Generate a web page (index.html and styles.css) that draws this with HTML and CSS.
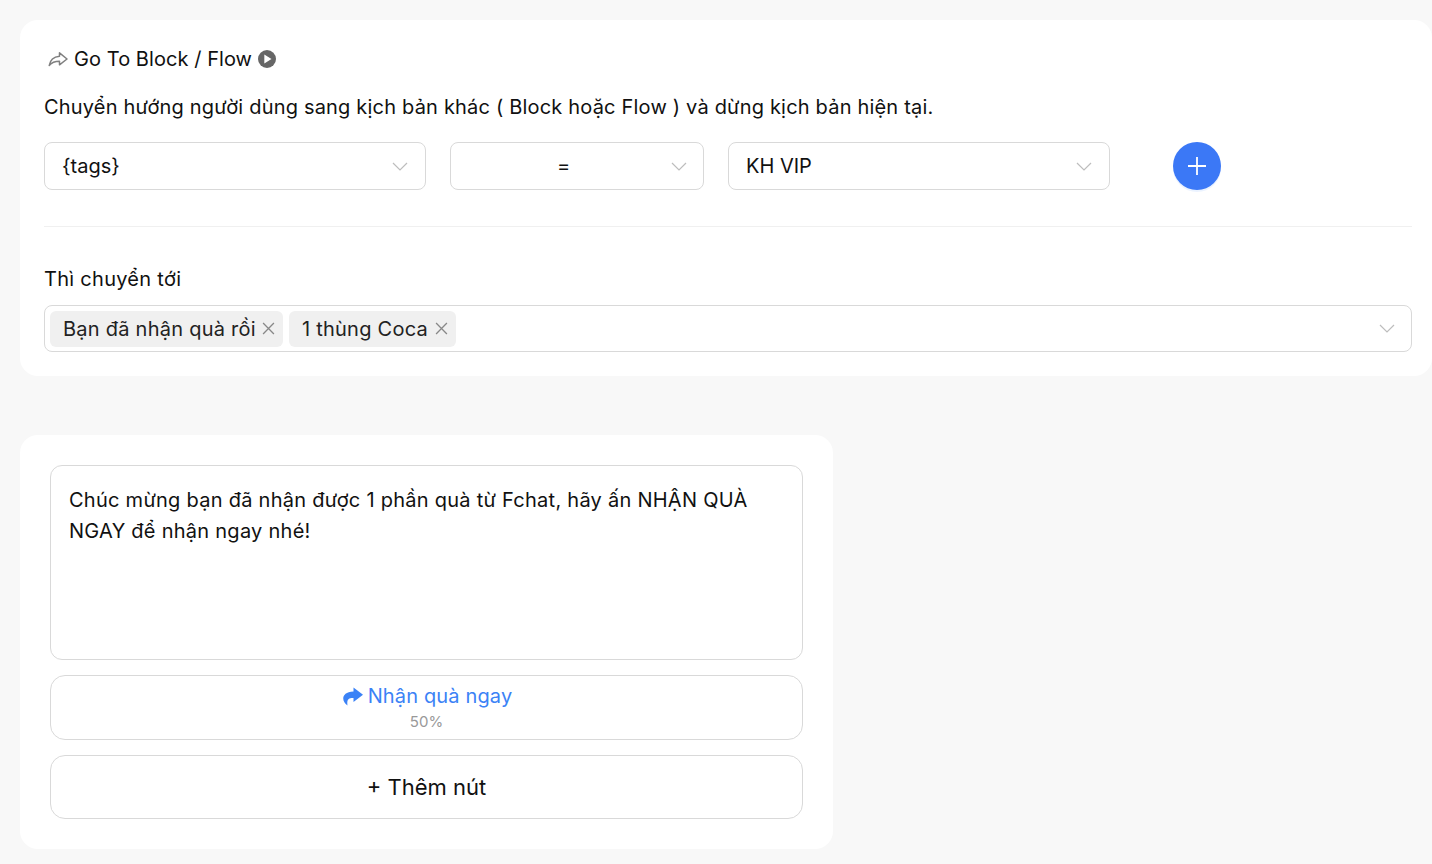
FILE: index.html
```html
<!DOCTYPE html>
<html lang="vi">
<head>
  <meta charset="UTF-8">
  <meta name="viewport" content="width=device-width, initial-scale=1.0">
  <title>Go To Block / Flow</title>
  <link rel="stylesheet" href="styles.css">
</head>
<body>
  <section class="card flow-card">
    <h2 class="flow-title">
      <svg class="share-outline" width="20" height="16" viewBox="0 0 20 16"><path d="M11.5 1.800 19 8l-7.500 5.800v-3.500C7 10.300 3.800 11.300 1.200 14.500 2 9.500 5.500 5.800 11.500 5.200z" fill="none" stroke="#808080" stroke-width="1.500" stroke-linejoin="round"/></svg>
      <span>Go To Block / Flow</span>
      <svg width="18" height="18" viewBox="0 0 18 18"><circle cx="9" cy="9" r="9" fill="#666"/><path d="M6.300 4.500 13.500 9l-7.200 4.500z" fill="#fff"/></svg>
    </h2>
    <p class="flow-desc">Chuyển hướng người dùng sang kịch bản khác ( Block hoặc Flow ) và dừng kịch bản hiện tại.</p>

    <div class="condition-row">
      <div class="select select-tag">
        <span>{tags}</span>
        <svg class="chevron" width="16" height="9" viewBox="0 0 16 9"><path d="M1 1l7 7 7-7"/></svg>
      </div>
      <div class="select select-op">
        <span class="op-value">=</span>
        <svg class="chevron" width="16" height="9" viewBox="0 0 16 9"><path d="M1 1l7 7 7-7"/></svg>
      </div>
      <div class="select select-value">
        <span>KH VIP</span>
        <svg class="chevron" width="16" height="9" viewBox="0 0 16 9"><path d="M1 1l7 7 7-7"/></svg>
      </div>
      <button class="add-btn">
        <svg width="18" height="18" viewBox="0 0 18 18"><path d="M9 0v18M0 9h18" stroke="#fff" stroke-width="1.800"/></svg>
      </button>
    </div>

    <hr class="divider">

    <p class="target-label">Thì chuyển tới</p>
    <div class="select select-multi">
      <div class="chips">
        <span class="chip">Bạn đã nhận quà rồi <svg width="13" height="13" viewBox="0 0 12 12"><path d="M1 1l10 10M11 1 1 11"/></svg></span>
        <span class="chip chip-last">1 thùng Coca <svg width="13" height="13" viewBox="0 0 12 12"><path d="M1 1l10 10M11 1 1 11"/></svg></span>
      </div>
      <svg class="chevron" width="16" height="9" viewBox="0 0 16 9"><path d="M1 1l7 7 7-7"/></svg>
    </div>
  </section>

  <section class="card message-card">
    <div class="message-box">Chúc mừng bạn đã nhận được 1 phần quà từ Fchat, hãy ấn NHẬN QUÀ NGAY để nhận ngay nhé!</div>
    <div class="msg-button">
      <div class="msg-link">
        <svg width="22" height="19" viewBox="0 0 22 19"><path d="M12.500 0.500 22 7.800 12.500 15V11C8 10.800 5.500 12 6.500 18.500 0.500 15-0.500 5 12.500 4.500z" fill="#3b82f6"/></svg>
        <span>Nhận quà ngay</span>
      </div>
      <div class="msg-percent">50%</div>
    </div>
    <div class="msg-button msg-add">+ Thêm nút</div>
  </section>
</body>
</html>
```
FILE: styles.css
```css
* {
  box-sizing: border-box;
}

body {
  margin: 0;
  padding: 20px 0 0 20px;
  background-color: #f8f8f8;
  font-family: Inter, "Noto Sans", sans-serif;
  font-size: 20px;
  color: #111;
  overflow: hidden;
}

.card {
  background-color: #fff;
  border-radius: 18px;
}

.flow-card {
  height: 356px;
  padding: 27px 20px 0 24px;
}

.flow-title {
  display: flex;
  align-items: center;
  gap: 6px;
  margin: 0 0 0 4px;
  height: 24px;
  font-size: 20px;
  font-weight: 400;
  letter-spacing: 0.06px;
}

.flow-desc {
  margin: 23px 0 0;
  line-height: 26px;
  letter-spacing: 0.19px;
}

.condition-row {
  display: flex;
  align-items: center;
  margin-top: 22px;
}

.select {
  display: flex;
  align-items: center;
  justify-content: space-between;
  height: 48px;
  padding: 0 17px 0 17px;
  border: 1px solid #d9d9d9;
  border-radius: 8px;
}

.select-tag {
  width: 382px;
}

.select-op {
  width: 254px;
  margin-left: 24px;
  padding-right: 16px;
}

.op-value {
  margin-left: 89px;
}

.select-value {
  width: 382px;
  margin-left: 24px;
}

.chevron {
  fill: none;
  stroke: #bdbdbd;
  stroke-width: 1.200;
}

.add-btn {
  display: flex;
  align-items: center;
  justify-content: center;
  width: 48px;
  height: 48px;
  margin-left: 63px;
  padding: 0;
  border: none;
  border-radius: 50%;
  background-color: #3b78f6;
  box-shadow: 0 2px 0 rgba(5, 100, 255, 0.08);
}

.divider {
  height: 1px;
  margin: 36px 0 0;
  border: none;
  background-color: #f0f0f0;
}

.target-label {
  margin: 39px 0 0;
  line-height: 26px;
  letter-spacing: 0.28px;
}

.select-multi {
  height: 47px;
  margin-top: 13px;
  padding: 0 16px 0 5px;
  border-radius: 8px;
}

.chips {
  display: flex;
  gap: 6px;
}

.chip {
  display: flex;
  align-items: center;
  gap: 6px;
  height: 36px;
  padding: 0 8px 0 13px;
  border-radius: 6px;
  background-color: #f0f0f0;
  color: #222;
  letter-spacing: 0.25px;
}

.chip-last {
  gap: 7px;
}

.chip svg {
  fill: none;
  stroke: #888;
  stroke-width: 1.200;
}

.message-card {
  display: flex;
  flex-direction: column;
  gap: 15px;
  width: 813px;
  height: 414px;
  margin-top: 59px;
  padding: 30px;
}

.message-box {
  height: 195px;
  padding: 19px 18px 0;
  border: 1px solid #d9d9d9;
  border-radius: 12px;
  line-height: 31px;
  letter-spacing: 0.26px;
}

.msg-button {
  height: 65px;
  padding-top: 6px;
  border: 1px solid #d9d9d9;
  border-radius: 15px;
  text-align: center;
}

.msg-link {
  display: flex;
  align-items: center;
  justify-content: center;
  gap: 5px;
  height: 28px;
  color: #3b82f6;
  letter-spacing: 0.15px;
}

.msg-percent {
  margin-top: 3px;
  font-size: 15px;
  line-height: 18px;
  color: #999;
}

.msg-add {
  height: 64px;
  padding-top: 0;
  font-size: 22px;
  line-height: 62px;
}
```
